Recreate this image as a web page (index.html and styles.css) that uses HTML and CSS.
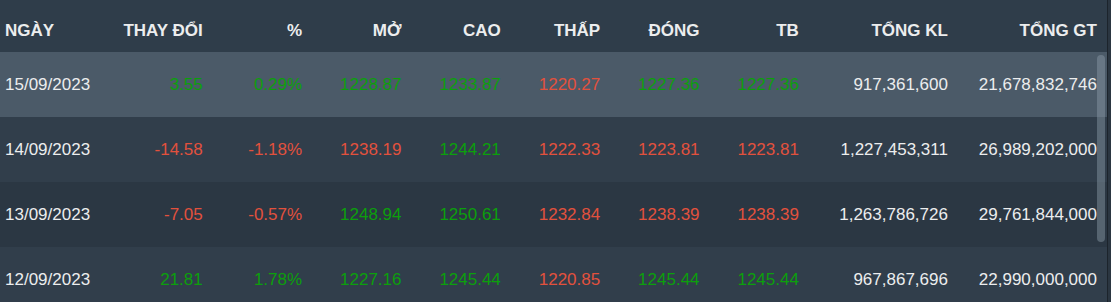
FILE: index.html
```html
<!DOCTYPE html>
<html lang="vi">
<head>
<meta charset="utf-8">
<title>Lịch sử giá</title>
<link rel="stylesheet" href="styles.css">
</head>
<body>
<div class="panel">
  <div class="row head">
    <div class="cell left">NGÀY</div>
    <div class="cell">THAY ĐỔI</div>
    <div class="cell">%</div>
    <div class="cell">MỞ</div>
    <div class="cell">CAO</div>
    <div class="cell">THẤP</div>
    <div class="cell">ĐÓNG</div>
    <div class="cell">TB</div>
    <div class="cell">TỔNG KL</div>
    <div class="cell">TỔNG GT</div>
  </div>
  <div class="body">
    <div class="row active">
      <div class="cell left">15/09/2023</div>
      <div class="cell up">3.55</div>
      <div class="cell up">0.29%</div>
      <div class="cell up">1228.87</div>
      <div class="cell up">1233.87</div>
      <div class="cell down">1220.27</div>
      <div class="cell up">1227.36</div>
      <div class="cell up">1227.36</div>
      <div class="cell">917,361,600</div>
      <div class="cell">21,678,832,746</div>
    </div>
    <div class="row">
      <div class="cell left">14/09/2023</div>
      <div class="cell down">-14.58</div>
      <div class="cell down">-1.18%</div>
      <div class="cell down">1238.19</div>
      <div class="cell up">1244.21</div>
      <div class="cell down">1222.33</div>
      <div class="cell down">1223.81</div>
      <div class="cell down">1223.81</div>
      <div class="cell">1,227,453,311</div>
      <div class="cell">26,989,202,000</div>
    </div>
    <div class="row alt">
      <div class="cell left">13/09/2023</div>
      <div class="cell down">-7.05</div>
      <div class="cell down">-0.57%</div>
      <div class="cell up">1248.94</div>
      <div class="cell up">1250.61</div>
      <div class="cell down">1232.84</div>
      <div class="cell down">1238.39</div>
      <div class="cell down">1238.39</div>
      <div class="cell">1,263,786,726</div>
      <div class="cell">29,761,844,000</div>
    </div>
    <div class="row">
      <div class="cell left">12/09/2023</div>
      <div class="cell up">21.81</div>
      <div class="cell up">1.78%</div>
      <div class="cell up">1227.16</div>
      <div class="cell up">1245.44</div>
      <div class="cell down">1220.85</div>
      <div class="cell up">1245.44</div>
      <div class="cell up">1245.44</div>
      <div class="cell">967,867,696</div>
      <div class="cell">22,990,000,000</div>
    </div>
    <div class="thumb"></div>
  </div>
</div>
</body>
</html>
```

FILE: styles.css
```css
html, body {
  margin: 0;
  padding: 0;
  height: 302px;
  overflow: hidden;
  background: #2b3641;
}
.panel {
  width: 1107px;
  height: 302px;
  border-right: 1px solid #1c242c;
  background: #313e4b;
  font-family: "Liberation Sans", Arial, sans-serif;
  color: #ecedee;
  overflow: hidden;
}
.row {
  display: grid;
  grid-template-columns: 10fr repeat(7, 9fr) repeat(2, 13.5fr);
  width: 1104px;
  padding-right: 3px;
  height: 65px;
  background: #313e4b;
  font-size: 17px;
}
.row.head {
  height: 52px;
  background: #2f3d4a;
  font-weight: bold;
  font-size: 17px;
}
.row.head .cell {
  padding-top: 9px;
}
.row.active { background: #4b5a68; }
.row.alt { background: #2b3743; }
.cell {
  display: flex;
  align-items: center;
  justify-content: flex-end;
  padding: 0 7px 0 0;
  white-space: nowrap;
}
.cell.left {
  justify-content: flex-start;
  padding: 0 0 0 5px;
}
.up { color: #0c9f0c; }
.down { color: #e2513d; }
.body {
  position: relative;
}
.thumb {
  position: absolute;
  top: 3px;
  left: 1097px;
  width: 8px;
  height: 187px;
  border-radius: 4px;
  background: rgba(140, 155, 168, 0.45);
}
```
